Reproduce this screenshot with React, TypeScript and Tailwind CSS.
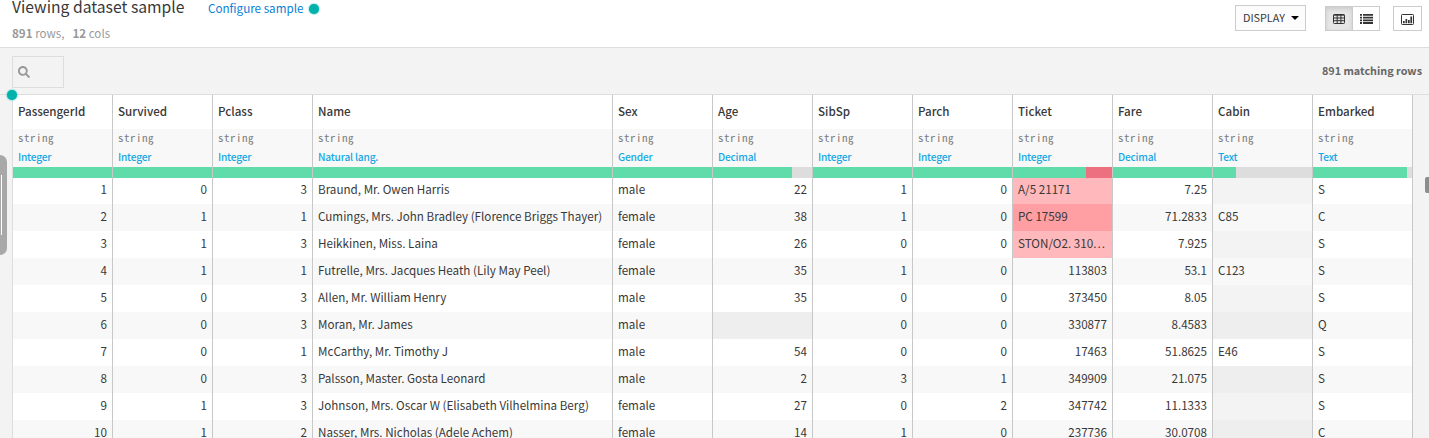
import { FaSearch } from "react-icons/fa";

type Column = {
  name: string;
  meaning: string;
  width: string;
  right?: boolean;
  ok: number;
  bad?: number;
};

const columns: Column[] = [
  { name: "PassengerId", meaning: "Integer", width: "w-[100px]", right: true, ok: 99 },
  { name: "Survived", meaning: "Integer", width: "w-[100px]", right: true, ok: 99 },
  { name: "Pclass", meaning: "Integer", width: "w-[100px]", right: true, ok: 99 },
  { name: "Name", meaning: "Natural lang.", width: "w-[300px]", ok: 299 },
  { name: "Sex", meaning: "Gender", width: "w-[100px]", ok: 99 },
  { name: "Age", meaning: "Decimal", width: "w-[100px]", right: true, ok: 79 },
  { name: "SibSp", meaning: "Integer", width: "w-[100px]", right: true, ok: 99 },
  { name: "Parch", meaning: "Integer", width: "w-[100px]", right: true, ok: 99 },
  { name: "Ticket", meaning: "Integer", width: "w-[100px]", right: true, ok: 73, bad: 26 },
  { name: "Fare", meaning: "Decimal", width: "w-[100px]", right: true, ok: 99 },
  { name: "Cabin", meaning: "Text", width: "w-[100px]", ok: 23 },
  { name: "Embarked", meaning: "Text", width: "w-[100px]", ok: 94 },
];

const rows: string[][] = [
  ["1", "0", "3", "Braund, Mr. Owen Harris", "male", "22", "1", "0", "A/5 21171", "7.25", "", "S"],
  ["2", "1", "1", "Cumings, Mrs. John Bradley (Florence Briggs Thayer)", "female", "38", "1", "0", "PC 17599", "71.2833", "C85", "C"],
  ["3", "1", "3", "Heikkinen, Miss. Laina", "female", "26", "0", "0", "STON/O2. 310...", "7.925", "", "S"],
  ["4", "1", "1", "Futrelle, Mrs. Jacques Heath (Lily May Peel)", "female", "35", "1", "0", "113803", "53.1", "C123", "S"],
  ["5", "0", "3", "Allen, Mr. William Henry", "male", "35", "0", "0", "373450", "8.05", "", "S"],
  ["6", "0", "3", "Moran, Mr. James", "male", "", "0", "0", "330877", "8.4583", "", "Q"],
  ["7", "0", "1", "McCarthy, Mr. Timothy J", "male", "54", "0", "0", "17463", "51.8625", "E46", "S"],
  ["8", "0", "3", "Palsson, Master. Gosta Leonard", "male", "2", "3", "1", "349909", "21.075", "", "S"],
  ["9", "1", "3", "Johnson, Mrs. Oscar W (Elisabeth Vilhelmina Berg)", "female", "27", "0", "2", "347742", "11.1333", "", "S"],
  ["10", "1", "2", "Nasser, Mrs. Nicholas (Adele Achem)", "female", "14", "1", "0", "237736", "30.0708", "", "C"],
];

function cellBackground(value: string, invalid: boolean, odd: boolean) {
  if (invalid) return odd ? "bg-[#ff9fa3]" : "bg-[#ffb8bb]";
  if (value === "") return odd ? "bg-[#eeeeee]" : "bg-[#f3f3f3]";
  return odd ? "bg-[#f8f8f8]" : "bg-white";
}

function CellText({ value }: { value: string }) {
  if (!value.endsWith("...")) return <>{value}</>;
  return (
    <>
      {value.slice(0, -3)}
      <span className="tracking-[1px]">...</span>
    </>
  );
}

function TableIcon() {
  return (
    <svg width="12" height="10" viewBox="0 0 12 10" fill="none" stroke="#333" strokeWidth="1">
      <rect x="0.5" y="0.5" width="11" height="9" rx="0.8" />
      <path d="M0.5 1.2h11M0.5 4h11M0.5 6.7h11M4.2 1v8.5M7.9 1v8.5" />
    </svg>
  );
}

function ListIcon() {
  return (
    <svg width="13" height="10" viewBox="0 0 13 10" fill="#333">
      <path d="M0 0h2v1.8H0zM3 0h10v1.8H3zM0 2.7h2v1.8H0zM3 2.7h10v1.8H3zM0 5.4h2v1.8H0zM3 5.4h10v1.8H3zM0 8.1h2v1.8H0zM3 8.1h10v1.8H3z" />
    </svg>
  );
}

function ChartIcon() {
  return (
    <svg width="13" height="11" viewBox="0 0 13 11" fill="#333">
      <rect x="0.5" y="0.5" width="12" height="10" rx="0.8" fill="none" stroke="#333" />
      <path d="M2 7h1.7v2.2H2zM4.5 5h1.7v4.2H4.5zM7 6h1.7v3.2H7zM9.4 2.6h1.7v6.6H9.4z" />
    </svg>
  );
}

export default function App() {
  return (
    <div className="relative flex h-[438px] w-[1429px] flex-col overflow-hidden bg-[#f3f3f3] font-['Noto_Sans_CJK_JP','Noto_Sans_CJK_SC',sans-serif] text-[11.65px] text-[#383838]">
      <header className="flex h-12 shrink-0 justify-between border-b border-[#dddddd] bg-white pl-3 pr-[7px]">
        <div className="flex flex-col">
          <div className="flex h-[18px] items-start whitespace-nowrap">
            <h1 className="-mt-1 w-[196px] text-[15.7px] leading-[22px]">Viewing dataset sample</h1>
            <a className="-mt-px text-[11.65px] leading-[18px] text-[#0a7fd4]">Configure sample</a>
            <span className="ml-[6px] mt-1 size-[10px] rounded-full bg-[#00b2ac] shadow-[0_0_2px_#00b2ac]" />
          </div>
          <p className="mt-[6px] flex gap-2 text-[11.6px] leading-[18px] text-[#999]">
            <span><b>891</b> rows,</span>
            <span><b>12</b> cols</span>
          </p>
        </div>
        <div className="flex items-start">
          <button className="mt-[5px] flex h-[26px] w-[71px] items-center border border-[#cccccc] bg-[#fcfcfc] pb-px pl-[7px] text-[10.8px]">
            DISPLAY
            <svg className="ml-[6px]" width="8" height="4" viewBox="0 0 8 4"><path d="M0 0h8L4 4z" fill="#000" /></svg>
          </button>
          <div className="ml-[19px] mt-[6px] flex h-[25px] w-[55px] border border-[#cccccc]">
            <button className="flex w-[27px] items-center justify-center border-r border-[#cccccc] bg-[#e6e6e6] pt-px shadow-[inset_0_2px_4px_rgba(0,0,0,0.12)]"><TableIcon /></button>
            <button className="flex flex-1 items-center justify-center pt-px"><ListIcon /></button>
          </div>
          <button className="ml-[13px] mt-[6px] flex h-[25px] w-[29px] items-center justify-center border border-[#cccccc] pt-[2px]"><ChartIcon /></button>
        </div>
      </header>

      <div className="flex h-[47px] shrink-0 items-start justify-between border-b border-[#dddddd] pl-3 pr-[7px]">
        <div className="mt-2 flex h-8 w-[52px] items-center border border-[#dddddd] pl-[5px]">
          <FaSearch className="size-3 text-[#999]" />
        </div>
        <span className="mt-[13px] text-[10.8px] font-bold leading-[18px] text-[#666]">891 matching rows</span>
      </div>

      <main className="ml-3 w-[1401px] flex-1 border-l border-[#dddddd]">
        <div className="flex">
          {columns.map((c) => (
            <div key={c.name} className={`${c.width} h-[83px] shrink-0 border-r border-[#c8c8c8] bg-[#f8f8f8]`}>
              <div className="h-[34px] bg-white pl-[5px] text-[11.6px] font-medium leading-[32px]">{c.name}</div>
              <div className="h-[19px] pl-[5px] font-['Noto_Sans_Mono_CJK_JP','Liberation_Mono',monospace] text-[11px] leading-[17px] tracking-[0.5px] text-[#7c7c7c]">string</div>
              <div className="h-[19px] pl-[5px] text-[10.2px] font-medium leading-[17px] tracking-[-0.2px] text-[#16a8e4]">{c.meaning}</div>
              <div className="flex h-[11px] bg-[#dddddd]">
                <div className="bg-[#5fdcaa]" style={{ width: c.ok }} />
                {c.bad && <div className="bg-[#ec7080]" style={{ width: c.bad }} />}
              </div>
            </div>
          ))}
        </div>
        <div className="-mt-px">
          {rows.map((row, r) => (
            <div key={row[0]} className="flex">
              {row.map((value, i) => {
                const invalid = i === 8 && !/^\d+$/.test(value);
                return (
                  <div
                    key={columns[i].name}
                    className={`${columns[i].width} ${r === 0 ? "mt-px h-[26px] leading-[22px]" : "h-[27px] leading-[24px]"} shrink-0 whitespace-nowrap border-r border-[#c8c8c8] px-[5px] ${columns[i].right && !invalid ? "text-right" : ""} ${cellBackground(value, invalid, r % 2 === 1)}`}
                  >
                    <CellText value={value} />
                  </div>
                );
              })}
            </div>
          ))}
        </div>
      </main>

      <span className="absolute left-[7px] top-[90px] size-[10px] rounded-full bg-[#00b2ac] shadow-[0_0_2px_#00b2ac]" />
      <div className="absolute left-0 top-[155px] flex h-[100px] w-[7px] items-center rounded-r-[7px] bg-[#a8a8a8]">
        <span className="ml-px h-[60px] w-px bg-white" />
      </div>
      <div className="absolute left-[1425px] top-[177px] h-4 w-2 rounded-[2px] bg-[#8c8c8c]" />
    </div>
  );
}
